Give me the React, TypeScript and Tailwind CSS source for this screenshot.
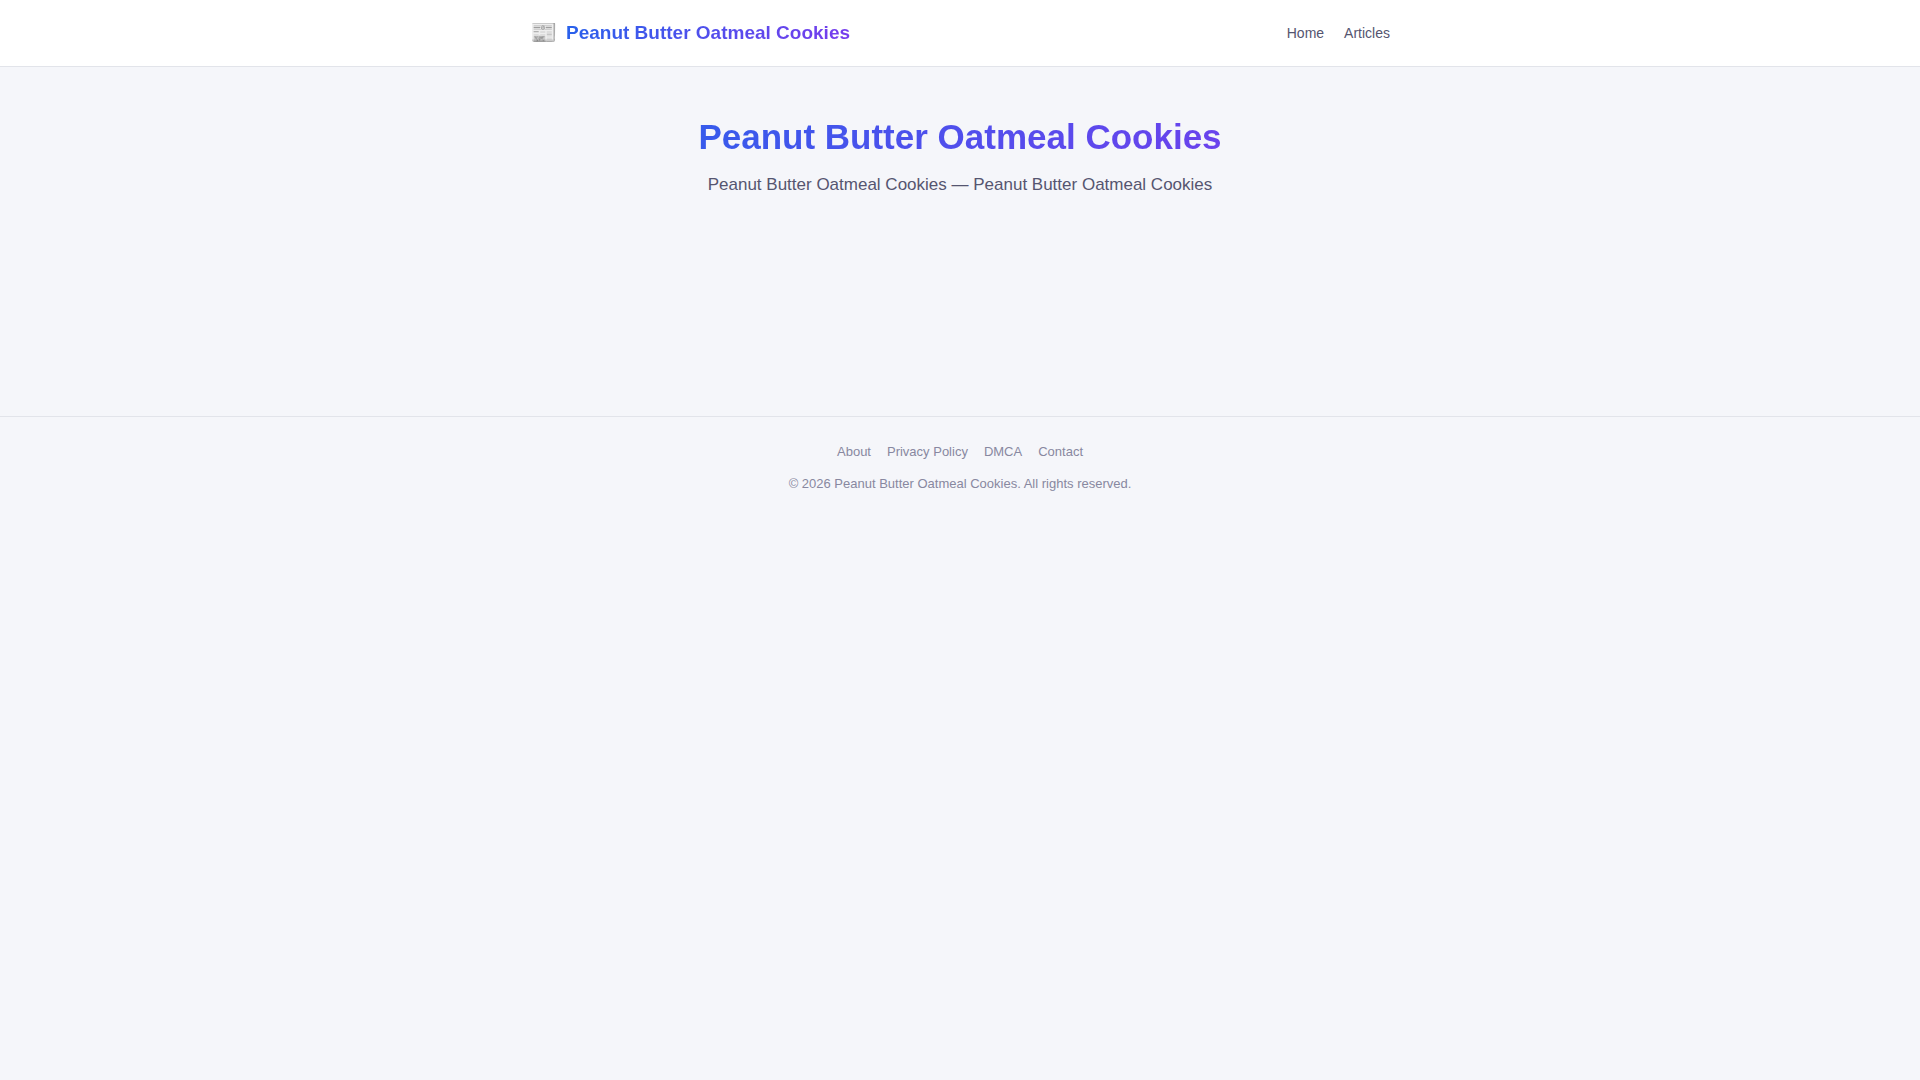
const footerLinks = ['About', 'Privacy Policy', 'DMCA', 'Contact'];

export default function App() {
  return (
    <div className="min-h-screen bg-[#f5f6fa] font-['Liberation_Sans',Arial,sans-serif] text-base text-[#1a1a2e]">
      <header className="border-b border-[#e2e4ea] bg-white">
        <div className="mx-auto flex max-w-[900px] items-center justify-between px-5 py-4">
          <a href="#" className="flex items-center gap-[9px] text-[19px] leading-[34px] font-bold">
            <span className="text-[22px] leading-[34px]">📰</span>
            <span className="bg-[linear-gradient(135deg,#2563eb,#7c3aed)] bg-clip-text leading-8 text-transparent">
              Peanut Butter Oatmeal Cookies
            </span>
          </a>
          <nav className="flex gap-5 text-sm text-[#555570]">
            <a href="#">Home</a>
            <a href="#">Articles</a>
          </nav>
        </div>
      </header>
      <main className="mx-auto max-w-[900px] px-5">
        <section className="pt-12 pb-8 text-center">
          <h1 className="mb-3 bg-[linear-gradient(135deg,#2563eb,#7c3aed)] bg-clip-text text-[35px] leading-[43px] font-bold text-transparent">
            Peanut Butter Oatmeal Cookies
          </h1>
          <p className="text-[17px] leading-[29px] text-[#555570]">
            Peanut Butter Oatmeal Cookies — Peanut Butter Oatmeal Cookies
          </p>
        </section>
        <section className="h-[185px]" />
      </main>
      <footer className="border-t border-[#e2e4ea] px-5 py-6 text-center text-[13px] leading-[22px] text-[#8888a0]">
        <nav className="mb-[10px] flex justify-center gap-4">
          {footerLinks.map((label) => (
            <a key={label} href="#">{label}</a>
          ))}
        </nav>
        <p>© 2026 Peanut Butter Oatmeal Cookies. All rights reserved.</p>
      </footer>
    </div>
  );
}
